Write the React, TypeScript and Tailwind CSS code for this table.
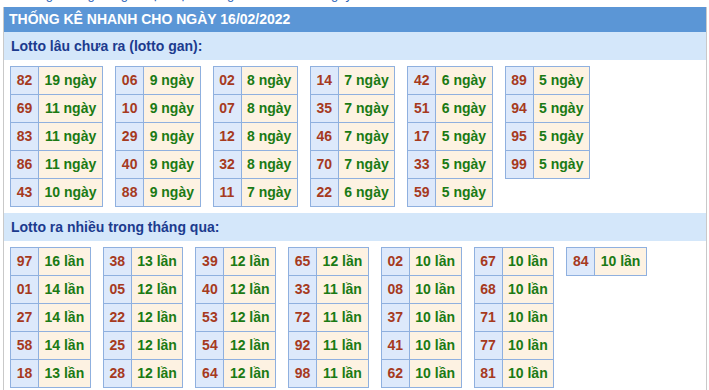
const GAN: [string, string][][] = [
  [["82", "19 ngày"], ["69", "11 ngày"], ["83", "11 ngày"], ["86", "11 ngày"], ["43", "10 ngày"]],
  [["06", "9 ngày"], ["10", "9 ngày"], ["29", "9 ngày"], ["40", "9 ngày"], ["88", "9 ngày"]],
  [["02", "8 ngày"], ["07", "8 ngày"], ["12", "8 ngày"], ["32", "8 ngày"], ["11", "7 ngày"]],
  [["14", "7 ngày"], ["35", "7 ngày"], ["46", "7 ngày"], ["70", "7 ngày"], ["22", "6 ngày"]],
  [["42", "6 ngày"], ["51", "6 ngày"], ["17", "5 ngày"], ["33", "5 ngày"], ["59", "5 ngày"]],
  [["89", "5 ngày"], ["94", "5 ngày"], ["95", "5 ngày"], ["99", "5 ngày"]],
];

const NHIEU: [string, string][][] = [
  [["97", "16 lần"], ["01", "14 lần"], ["27", "14 lần"], ["58", "14 lần"], ["18", "13 lần"]],
  [["38", "13 lần"], ["05", "12 lần"], ["22", "12 lần"], ["25", "12 lần"], ["28", "12 lần"]],
  [["39", "12 lần"], ["40", "12 lần"], ["53", "12 lần"], ["54", "12 lần"], ["64", "12 lần"]],
  [["65", "12 lần"], ["33", "11 lần"], ["72", "11 lần"], ["92", "11 lần"], ["98", "11 lần"]],
  [["02", "10 lần"], ["08", "10 lần"], ["37", "10 lần"], ["41", "10 lần"], ["62", "10 lần"]],
  [["67", "10 lần"], ["68", "10 lần"], ["71", "10 lần"], ["77", "10 lần"], ["81", "10 lần"]],
  [["84", "10 lần"]],
];

function LotoTable({ rows }: { rows: [string, string][] }) {
  return (
    <table className="border-collapse self-start">
      <tbody>
        {rows.map(([num, val]) => (
          <tr key={num} className="h-[28px]">
            <td className="w-[28px] border border-[#8fb0df] bg-[#dde9fb] px-0 text-center text-[#a63a1e]">
              {num}
            </td>
            <td className="border border-[#8fb0df] bg-[#fdf2e2] px-[5.5px] text-center text-[#1a7a14] whitespace-nowrap">
              {val}
            </td>
          </tr>
        ))}
      </tbody>
    </table>
  );
}

function SubHead({ children }: { children: React.ReactNode }) {
  return (
    <div className="flex h-[28px] items-center bg-[#d4e7fa] pl-[7px] text-[14px] font-bold text-[#1c3b8e]">
      {children}
    </div>
  );
}

export default function App() {
  return (
    <div
      className="h-[390px] w-[709px] overflow-hidden bg-white text-[14px] font-bold"
      style={{ fontFamily: '"Liberation Sans", Arial, sans-serif' }}
    >
      {/* cut-off link line above the box, only descenders show */}
      <div className="h-[7px] overflow-hidden">
        <div className="-mt-[13px] pl-[16px] text-[13px] font-normal leading-[16px] text-[#2a62b8]">
          Thống kê lô gan · giải đặc biệt · thống kê nhanh theo ngày
        </div>
      </div>

      <div className="ml-[3px] w-[704px] border-x border-[#c9c9c9]">
        <div className="flex h-[25px] items-center bg-[#5b96d6] pl-[5px] text-[14px] font-bold text-white">
          THỐNG KÊ NHANH CHO NGÀY 16/02/2022
        </div>

        <SubHead>Lotto lâu chưa ra (lotto gan):</SubHead>
        <div className="flex gap-[12px] py-[6px] pl-[6px]">
          {GAN.map((rows, i) => (
            <LotoTable key={i} rows={rows} />
          ))}
        </div>

        <SubHead>Lotto ra nhiều trong tháng qua:</SubHead>
        <div className="flex gap-[12px] py-[6px] pl-[6px]">
          {NHIEU.map((rows, i) => (
            <LotoTable key={i} rows={rows} />
          ))}
        </div>
      </div>
    </div>
  );
}
